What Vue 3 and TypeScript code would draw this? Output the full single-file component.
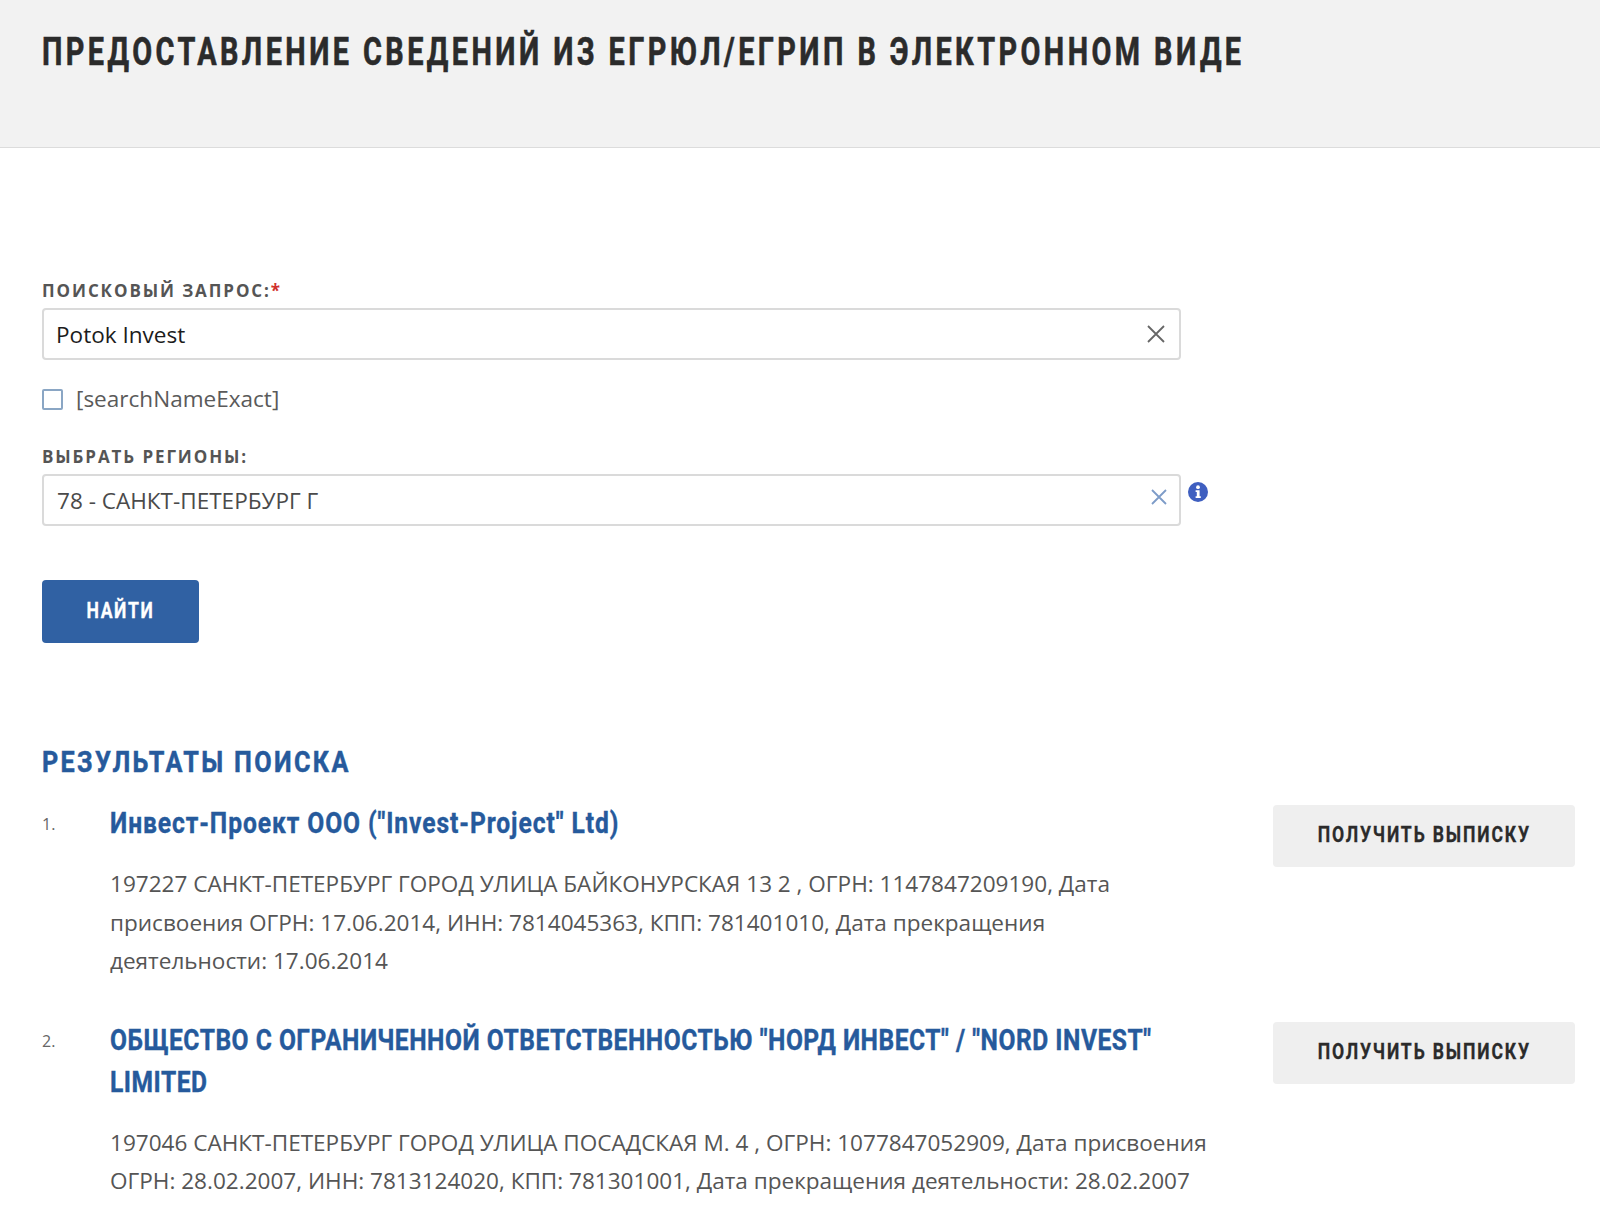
<script setup lang="ts">
interface Result {
  n: number
  title: string
  text: string
}
const results: Result[] = [
  {
    n: 1,
    title: 'Инвест-Проект ООО ("Invest-Project" Ltd)',
    text: '197227 САНКТ-ПЕТЕРБУРГ ГОРОД УЛИЦА БАЙКОНУРСКАЯ 13 2 , ОГРН: 1147847209190, Дата присвоения ОГРН: 17.06.2014, ИНН: 7814045363, КПП: 781401010, Дата прекращения деятельности: 17.06.2014'
  },
  {
    n: 2,
    title: 'ОБЩЕСТВО С ОГРАНИЧЕННОЙ ОТВЕТСТВЕННОСТЬЮ "НОРД ИНВЕСТ" / "NORD INVEST" LIMITED',
    text: '197046 САНКТ-ПЕТЕРБУРГ ГОРОД УЛИЦА ПОСАДСКАЯ М. 4 , ОГРН: 1077847052909, Дата присвоения ОГРН: 28.02.2007, ИНН: 7813124020, КПП: 781301001, Дата прекращения деятельности: 28.02.2007'
  }
]
</script>

<template>
  <div class="page">
    <header class="head">
      <h1>ПРЕДОСТАВЛЕНИЕ СВЕДЕНИЙ ИЗ ЕГРЮЛ/ЕГРИП В ЭЛЕКТРОННОМ ВИДЕ</h1>
    </header>
    <main class="main">
      <form class="form" @submit.prevent>
        <label class="label">ПОИСКОВЫЙ ЗАПРОС:<span class="req">*</span></label>
        <div class="field">
          <span class="value dark">Potok Invest</span>
          <svg class="x" width="20" height="20" viewBox="0 0 20 20"><path d="M2 2 L18 18 M18 2 L2 18" stroke="#666" stroke-width="1.8" fill="none"/></svg>
        </div>
        <div class="check">
          <span class="box"></span>
          <span class="check-text">[searchNameExact]</span>
        </div>
        <label class="label second">ВЫБРАТЬ РЕГИОНЫ:</label>
        <div class="field-row">
          <div class="field select">
            <span class="value">78 - САНКТ-ПЕТЕРБУРГ Г</span>
            <svg class="x2" width="16" height="16" viewBox="0 0 16 16"><path d="M1 1 L15 15 M15 1 L1 15" stroke="#7d9cc8" stroke-width="1.8" fill="none"/></svg>
          </div>
          <svg class="info" width="20" height="20" viewBox="0 0 20 20">
            <circle cx="10" cy="10" r="10" fill="#3f5fc0"/>
            <circle cx="10" cy="5.2" r="1.9" fill="#fff"/>
            <path d="M7.6 8.2 H11.6 V14.2 H12.8 V16 H7.6 V14.2 H8.8 V10 H7.6 Z" fill="#fff"/>
          </svg>
        </div>
        <button class="find" type="submit"><span class="btn-label">НАЙТИ</span></button>
      </form>
      <h2 class="results-title">РЕЗУЛЬТАТЫ ПОИСКА</h2>
      <ol class="list">
        <li v-for="r in results" :key="r.n" class="item">
          <span class="num">{{ r.n }}.</span>
          <div class="body">
            <a class="title">{{ r.title }}</a>
            <p class="text">{{ r.text }}</p>
          </div>
          <button class="get" type="button"><span class="btn-label">ПОЛУЧИТЬ ВЫПИСКУ</span></button>
        </li>
      </ol>
    </main>
  </div>
</template>

<style>
html, body { margin: 0; background: #fff; }
</style>

<style scoped>
.page {
  width: 1600px;
  height: 1215px;
  overflow: hidden;
  background: #fff;
  font-family: "Open Sans", sans-serif;
  color: #4a4a4a;
}
.head {
  height: 148px;
  box-sizing: border-box;
  background: #f2f2f2;
  border-bottom: 1px solid #dcdcdc;
  padding: 28px 42px 0;
}
h1 {
  margin: 0;
  width: fit-content;
  font-family: Roboto, sans-serif;
  font-weight: 700;
  font-size: 38px;
  line-height: 48px;
  letter-spacing: 4.5px;
  color: #2b2b2b;
  -webkit-text-stroke: 0.6px #2b2b2b;
  white-space: nowrap;
  transform: scaleX(0.76);
  transform-origin: left center;
}
.main { padding: 131px 25px 0 42px; }
.form { display: flex; flex-direction: column; align-items: flex-start; }
.label {
  font-size: 17px;
  line-height: 24px;
  font-weight: 700;
  letter-spacing: 1.9px;
  color: #555;
}
.req { color: #d0312d; }
.second { margin-top: 33px; }
.field {
  width: 1139px;
  height: 52px;
  box-sizing: border-box;
  margin-top: 5px;
  border: 2px solid #dadada;
  border-radius: 4px;
  display: flex;
  align-items: center;
  justify-content: space-between;
  padding: 0 13px 0 12px;
  font-size: 22.55px;
}
.value { color: #4a4a4a; }
.value.dark { color: #1c1c1c; }
.field-row { display: flex; align-items: flex-start; }
.select { padding-left: 13px; padding-right: 12px; }
.x2 { margin-top: -6px; }
.info { margin: 13px 0 0 7px; }
.check { display: flex; align-items: center; margin-top: 26px; }
.box {
  width: 21px;
  height: 21px;
  box-sizing: border-box;
  border: 2px solid #8aa6c4;
  border-radius: 2px;
}
.check-text { margin-left: 13px; font-size: 22.55px; line-height: 26px; color: #5a5a5a; }
.find {
  margin-top: 54px;
  width: 157px;
  height: 63px;
  border: none;
  border-radius: 4px;
  background: #3061a3;
  color: #fff;
  font-family: Roboto, sans-serif;
  font-weight: 700;
  font-size: 22px;
  letter-spacing: 2px;
  padding: 0 0 3px;
}
.btn-label {
  display: inline-block;
  white-space: nowrap;
  transform: scaleX(0.8);
  -webkit-text-stroke: 0.3px currentColor;
}
.results-title {
  margin: 99px 0 0;
  width: fit-content;
  font-family: Roboto, sans-serif;
  font-weight: 700;
  font-size: 30px;
  line-height: 40px;
  letter-spacing: 2.8px;
  color: #265a9c;
  -webkit-text-stroke: 0.5px #265a9c;
  white-space: nowrap;
  transform: scaleX(0.84);
  transform-origin: left center;
}
.list { list-style: none; margin: 12px 0 0; padding: 0; }
.item {
  display: grid;
  grid-template-columns: 68px 1163px 302px;
  margin-bottom: 30px;
}
.num { font-size: 16px; line-height: 24px; margin-top: 18px; color: #666; }
.title {
  display: block;
  width: 1341px;
  margin-top: 8px;
  font-family: Roboto, sans-serif;
  font-weight: 700;
  font-size: 30px;
  line-height: 42px;
  color: #265a9c;
  -webkit-text-stroke: 0.4px #265a9c;
  transform: scaleX(0.82);
  transform-origin: left top;
}
.item:nth-child(1) .title { letter-spacing: 1.13px; }
.item:nth-child(2) .title { letter-spacing: 0.62px; }
.text {
  margin: 21px 0 0;
  font-size: 22.55px;
  line-height: 38.6px;
  color: #555;
}
.item:nth-child(1) .text { width: 1090px; }
.item:nth-child(2) .text { width: 1120px; }
.get {
  grid-column: 3;
  grid-row: 1;
  height: 62px;
  margin-top: 11px;
  border: none;
  border-radius: 4px;
  background: #efefef;
  color: #2b2b2b;
  font-family: Roboto, sans-serif;
  font-weight: 700;
  font-size: 22px;
  letter-spacing: 2.3px;
  padding: 0 0 3px;
}
</style>
